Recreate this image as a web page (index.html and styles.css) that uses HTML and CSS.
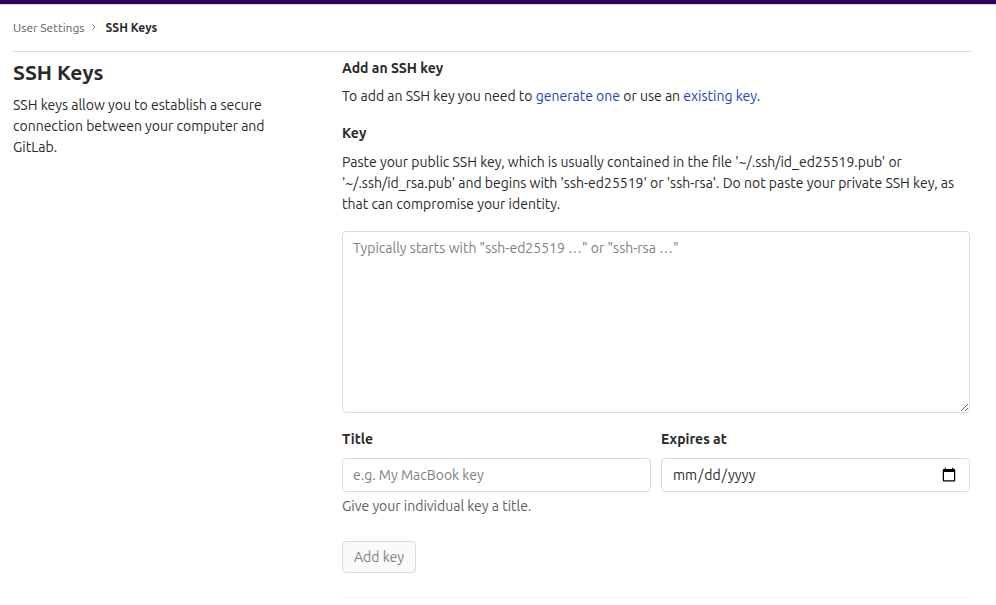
FILE: index.html
```html
<!DOCTYPE html>
<html lang="en">
<head>
<meta charset="utf-8">
<meta name="viewport" content="width=device-width, initial-scale=1">
<title>SSH Keys · User Settings</title>
<link rel="stylesheet" href="styles.css">
</head>
<body>
<header class="navbar"></header>
<div class="page">
  <nav class="breadcrumbs" aria-label="Breadcrumbs">
    <a class="crumb" href="#">User Settings</a>
    <svg class="chevron" viewBox="0 0 8 8" aria-hidden="true"><path d="M2.5 1.5 5 4 2.5 6.5"/></svg>
    <a class="crumb crumb-current" href="#" aria-current="page">SSH Keys</a>
  </nav>
  <main class="settings">
    <section class="intro">
      <h1 class="title">SSH Keys</h1>
      <p class="text">SSH keys allow you to establish a secure connection between your computer and GitLab.</p>
    </section>
    <section class="content">
      <h2 class="heading">Add an SSH key</h2>
      <p class="text lead">To add an SSH key you need to <a class="link" href="#">generate one</a> or use an <a class="link" href="#">existing key</a>.</p>
      <form class="form">
        <label class="heading label" for="key">Key</label>
        <p class="text key-help">Paste your public SSH key, which is usually contained in the file '~/.ssh/id_ed25519.pub' or '~/.ssh/id_rsa.pub' and begins with 'ssh-ed25519' or 'ssh-rsa'. Do not paste your private SSH key, as that can compromise your identity.</p>
        <textarea class="control key-input" id="key" placeholder='Typically starts with "ssh-ed25519 …" or "ssh-rsa …"'></textarea>
        <div class="fields">
          <div class="field">
            <label class="heading label" for="title">Title</label>
            <input class="control" id="title" type="text" placeholder="e.g. My MacBook key">
            <p class="text hint">Give your individual key a title.</p>
          </div>
          <div class="field">
            <label class="heading label" for="expires">Expires at</label>
            <input class="control" id="expires" type="date">
          </div>
        </div>
        <button class="submit" type="submit" disabled>Add key</button>
      </form>
      <hr class="divider">
    </section>
  </main>
</div>
</body>
</html>
```
FILE: styles.css
```css
* {
  box-sizing: border-box;
}

body {
  margin: 0;
  background: #fff;
  color: #292929;
  font: 14px/21px Ubuntu, "Noto Sans", sans-serif;
}

.navbar {
  height: 5px;
  background: #30005d;
  border-bottom: 1px solid #dbdbdb;
}

.page {
  padding: 0 25px 0 13px;
}

.breadcrumbs {
  display: flex;
  align-items: center;
  gap: 5px;
  height: 47px;
  padding-bottom: 2px;
  border-bottom: 1px solid #dbdbdb;
  font-size: 12px;
}

.crumb {
  color: #5e5e5e;
  text-decoration: none;
}

.crumb-current {
  color: #292929;
  font-weight: 700;
}

.chevron {
  width: 8px;
  height: 8px;
  margin-right: 3px;
  fill: none;
  stroke: #868686;
  stroke-width: 1;
}

.settings {
  display: grid;
  grid-template-columns: minmax(0, 1fr) minmax(0, 2fr);
  gap: 15px;
  padding: 6px 1px 0 0;
}

.title {
  margin: 2px 0 11px;
  font-size: 21px;
  line-height: 24px;
}

.intro .text {
  max-width: 272px;
}

.text {
  margin: 0;
}

.heading {
  display: block;
  margin: 0 0 7px;
  font-size: 14px;
  line-height: 21px;
  font-weight: 700;
}

.label {
  margin-bottom: 8px;
}

.lead {
  margin-bottom: 16px;
}

.link {
  color: #2440c4;
  text-decoration: none;
}

.key-help {
  margin-bottom: 16px;
}

.control {
  display: block;
  width: 100%;
  height: 34px;
  margin: 0;
  padding: 6px 10px;
  border: 1px solid #dbdbdb;
  border-radius: 4px;
  background: #fff;
  color: #292929;
  font: inherit;
}

.control::placeholder {
  color: #808080;
}

.control::-webkit-calendar-picker-indicator {
  width: 16px;
  height: 16px;
}

.key-input {
  height: 182px;
  resize: vertical;
}

.fields {
  display: grid;
  grid-template-columns: 1fr 1fr;
  gap: 10px;
  margin: 16px 0 24px;
}

.hint {
  margin-top: 4px;
  color: #5e5e5e;
}

.submit {
  height: 32px;
  padding: 0 11px;
  border: 1px solid #dbdbdb;
  border-radius: 4px;
  background: #fafafa;
  color: #808080;
  font: inherit;
}

.divider {
  margin: 24px 0 0;
  border: 0;
  border-top: 1px solid #eee;
}
```
